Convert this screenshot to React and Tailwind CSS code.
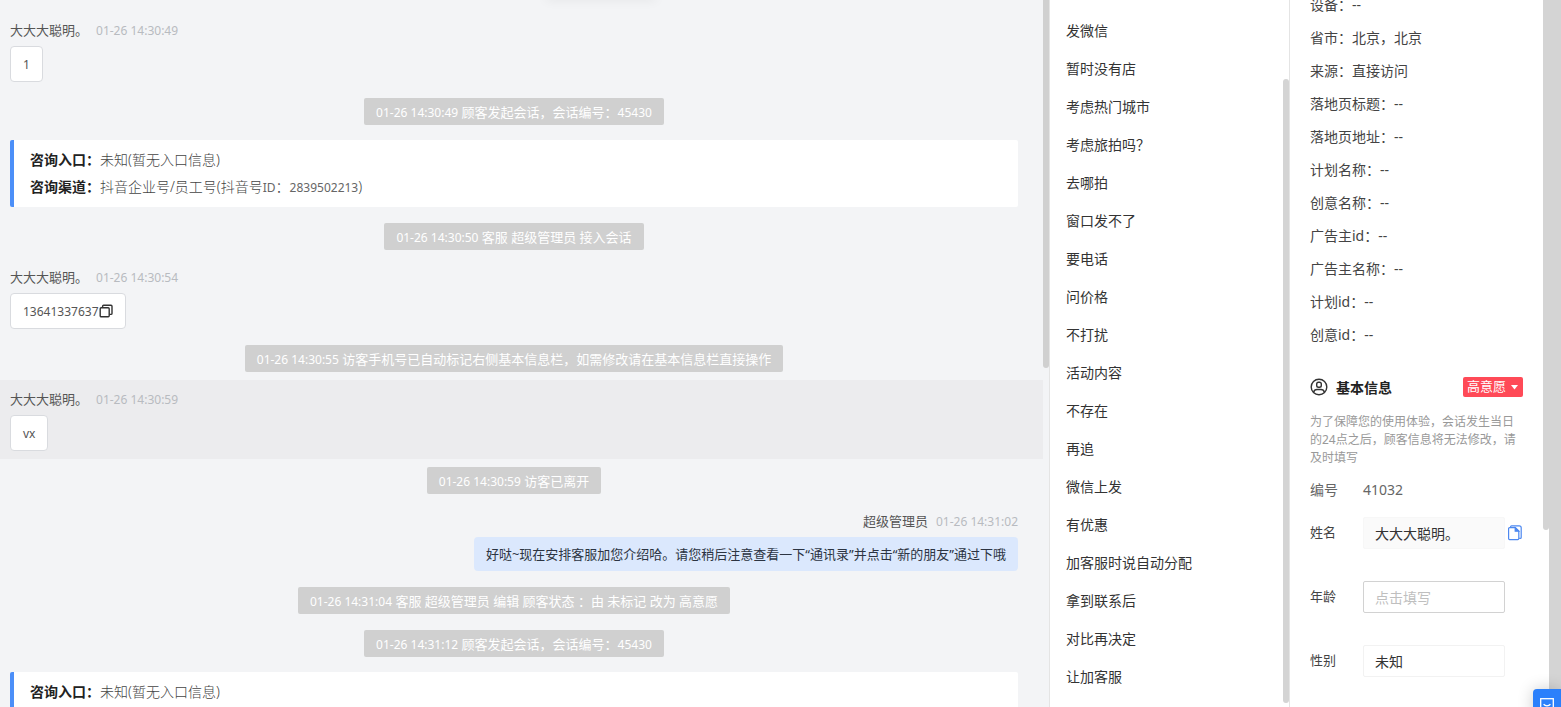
const timeline = [
  { type: 'visitor', name: '大大大聪明。', time: '01-26 14:30:49', text: '1' },
  { type: 'notice', time: '01-26 14:30:49', text: '顾客发起会话，会话编号：', code: '45430' },
  { type: 'entry', channel: '抖音企业号/员工号', channelId: '2839502213' },
  { type: 'notice', time: '01-26 14:30:50', text: '客服 超级管理员 接入会话' },
  { type: 'visitor', name: '大大大聪明。', time: '01-26 14:30:54', text: '13641337637', copy: true },
  { type: 'notice', time: '01-26 14:30:55', text: '访客手机号已自动标记右侧基本信息栏，如需修改请在基本信息栏直接操作' },
  { type: 'visitor', name: '大大大聪明。', time: '01-26 14:30:59', text: 'vx', active: true },
  { type: 'notice', time: '01-26 14:30:59', text: '访客已离开' },
  {
    type: 'agent',
    name: '超级管理员',
    time: '01-26 14:31:02',
    text: '好哒~现在安排客服加您介绍哈。请您稍后注意查看一下“通讯录”并点击“新的朋友”通过下哦',
  },
  { type: 'notice', time: '01-26 14:31:04', text: '客服 超级管理员 编辑 顾客状态 ：由 未标记 改为 高意愿' },
  { type: 'notice', time: '01-26 14:31:12', text: '顾客发起会话，会话编号：', code: '45430' },
  { type: 'entry' },
];

const replies = [
  '发微信', '暂时没有店', '考虑热门城市', '考虑旅拍吗？', '去哪拍', '窗口发不了',
  '要电话', '问价格', '不打扰', '活动内容', '不存在', '再追',
  '微信上发', '有优惠', '加客服时说自动分配', '拿到联系后', '对比再决定', '让加客服',
];

const details = [
  ['设备', '--'],
  ['省市', '北京，北京'],
  ['来源', '直接访问'],
  ['落地页标题', '--'],
  ['落地页地址', '--'],
  ['计划名称', '--'],
  ['创意名称', '--'],
  ['广告主id', '--'],
  ['广告主名称', '--'],
  ['计划id', '--'],
  ['创意id', '--'],
];

function CopyIcon() {
  return (
    <svg width="14" height="14" viewBox="0 0 14 14" fill="none" stroke="#333" strokeWidth="1.4">
      <rect x="1.2" y="3.8" width="9" height="9" rx="1" />
      <path d="M3.6 3.6V2.2a1 1 0 0 1 1-1H12a1 1 0 0 1 1 1v7.2a1 1 0 0 1-1 1h-1.6" />
    </svg>
  );
}

function PagesIcon() {
  return (
    <svg width="14" height="16" viewBox="0 0 14 16" fill="none" stroke="#4d88f0" strokeWidth="1.2">
      <path d="M2.6 2.4V1.8a1 1 0 0 1 1-1h7.6a2 2 0 0 1 2 2v9.6a1 1 0 0 1-1 1h-1" />
      <path d="M1.6 2.6h5.8l3.4 3.4v7.6a1 1 0 0 1-1 1H1.6a1 1 0 0 1-1-1v-10a1 1 0 0 1 1-1Z" />
      <path d="M7.2 2.8v3.4h3.5Z" fill="#4d88f0" />
    </svg>
  );
}

function UserIcon() {
  return (
    <svg width="18" height="18" viewBox="0 0 18 18" fill="none" stroke="#333" strokeWidth="1.4">
      <circle cx="9" cy="9" r="7.8" />
      <rect x="6.7" y="4.2" width="4.6" height="5" rx="1.8" />
      <path d="M3.6 14.2c.5-1.8 1.8-2.7 3.4-2.7h4c1.6 0 2.9.9 3.4 2.7" />
    </svg>
  );
}

function Sender({ item }) {
  return (
    <div className="flex items-center h-6 mb-[3px] text-[13px] text-[#555]">
      <span>{item.name}</span>
      <time className="ml-2 text-xs text-[#b8bbc0]">{item.time}</time>
    </div>
  );
}

function Visitor({ item }) {
  return (
    <div className={`py-2 pl-2.5 ${item.active ? 'bg-[#ececee]' : ''}`}>
      <Sender item={item} />
      <div className="inline-flex items-center h-9 px-3 pt-0.5 bg-white border border-[#d9dbdf] rounded text-xs text-[#555] align-top">
        {item.text}
        {item.copy && (
          <button type="button" aria-label="复制" className="pb-0.5">
            <CopyIcon />
          </button>
        )}
      </div>
    </div>
  );
}

function Agent({ item }) {
  return (
    <div className="flex flex-col items-end py-2 pl-2.5 pr-[25px]">
      <Sender item={item} />
      <p className="px-3 bg-[#dbe8fd] rounded text-[13px] leading-[34px] text-[#2c3442]">{item.text}</p>
    </div>
  );
}

function Notice({ item }) {
  return (
    <div className="flex justify-center py-2 pl-2.5 pr-[25px]">
      <p className="px-3 pt-px bg-[#d0d0d0] rounded-xs text-[13px] leading-[26px] text-white">
        <time className="text-xs">{item.time}</time> {item.text}
        {item.code && <span className="text-xs">{item.code}</span>}
      </p>
    </div>
  );
}

function Entry({ item }) {
  return (
    <div className="pt-[7px] pb-2 pl-2.5 pr-[25px]">
      <div className="min-h-[67px] py-1.5 pl-4 bg-white border-l-4 border-[#4c8ff8] rounded-xs text-[14px] leading-[27px] font-light text-[#444]">
        <p>
          <b className="font-bold text-[#222]">咨询入口：</b>未知(暂无入口信息)
        </p>
        {item.channel && (
          <p>
            <b className="font-bold text-[#222]">咨询渠道：</b>
            {item.channel}(抖音号<span className="text-xs font-normal text-[#666]">ID</span>：
            <span className="text-xs font-normal text-[#666]">{item.channelId}</span>)
          </p>
        )}
      </div>
    </div>
  );
}

const rows = { visitor: Visitor, agent: Agent, notice: Notice, entry: Entry };

function Chat() {
  return (
    <main className="relative flex-1 min-w-0 pt-[11px] bg-[#f3f4f6]">
      <div className="absolute -top-2 left-1/2 w-[110px] h-2 ml-6 shadow-[0_0_12px_rgba(0,0,0,0.07)]" />
      {timeline.map((item, i) => {
        const Row = rows[item.type];
        return <Row key={i} item={item} />;
      })}
    </main>
  );
}

function Replies() {
  return (
    <aside className="flex w-[241px] shrink-0 border-l border-r border-[#e4e4e4]">
      <ul className="flex-1 pt-3 pl-4 text-[14px] text-[#333]">
        {replies.map(text => (
          <li key={text} className="h-[38px] leading-[38px]">
            {text}
          </li>
        ))}
      </ul>
      <div className="flex w-1.5 pt-[79px] pb-1">
        <div className="flex-1 bg-[#d4d4d4] rounded-sm" />
      </div>
    </aside>
  );
}

function Profile() {
  const box = 'w-[142px] h-8 px-[11px] border rounded-xs text-[14px] outline-none';

  return (
    <aside className="w-[253px] shrink-0 px-5">
      <dl className="-mt-3 text-[14px] text-[#444]">
        {details.map(([label, value]) => (
          <div key={label} className="flex h-[33px] leading-[33px]">
            <dt>{label}：</dt>
            <dd>{value}</dd>
          </div>
        ))}
      </dl>

      <div className="flex items-center h-6 mt-6">
        <UserIcon />
        <h2 className="ml-2 text-[14px] font-bold text-[#222]">基本信息</h2>
        <button type="button" className="flex items-center h-5 ml-auto px-1 bg-[#ff4a57] rounded-xs text-[13px] text-white">
          高意愿
          <svg width="9" height="5" viewBox="0 0 9 5" className="ml-1">
            <path d="M1 0h7L4.5 4.5Z" fill="#fff" />
          </svg>
        </button>
      </div>
      <p className="mt-3.5 text-xs leading-[18px] text-[#999]">
        为了保障您的使用体验，会话发生当日的24点之后，顾客信息将无法修改，请及时填写
      </p>

      <div className="flex items-center h-8 mt-1.5 text-[14px] text-[#666]">
        <span className="w-[53px]">编号</span>
        <span>41032</span>
      </div>
      <form className="flex flex-col gap-8 mt-3 text-[13px] text-[#444]">
        <div className="flex items-center">
          <label htmlFor="name" className="w-[53px]">姓名</label>
          <input id="name" defaultValue="大大大聪明。" className={`${box} bg-[#fafafa] border-[#f7f7f7] text-[#333]`} />
          <button type="button" aria-label="复制姓名" className="ml-[3px]">
            <PagesIcon />
          </button>
        </div>
        <div className="flex items-center">
          <label htmlFor="age" className="w-[53px]">年龄</label>
          <input id="age" placeholder="点击填写" className={`${box} bg-white border-[#d2d2d2] placeholder:text-[#bfbfbf]`} />
        </div>
        <div className="flex items-center">
          <label htmlFor="gender" className="w-[53px]">性别</label>
          <select id="gender" className={`${box} appearance-none bg-white border-[#f2f2f2] text-[#333]`}>
            <option>未知</option>
            <option>男</option>
            <option>女</option>
          </select>
        </div>
      </form>
    </aside>
  );
}

export default function App() {
  return (
    <div
      lang="zh-CN"
      className="relative flex h-screen overflow-hidden bg-white font-['Noto_Sans','Noto_Sans_CJK_SC',sans-serif]"
    >
      <Chat />
      <div className="w-1.5 shrink-0 bg-[#f3f4f6]">
        <div className="h-[52%] bg-[#d0d0d0] rounded-b-sm" />
      </div>
      <Replies />
      <Profile />
      <div className="w-1.5 shrink-0">
        <div className="h-3/4 bg-[#d4d4d4] rounded-b-sm" />
      </div>
      <div className="w-3 shrink-0 bg-[#d4d4d4]" />

      <button
        type="button"
        aria-label="消息"
        className="absolute right-0 -bottom-3 flex justify-center w-7 h-[30px] pt-[9px] bg-[#2b80fb] rounded-tl shadow-[0_0_16px_rgba(0,0,0,0.2)]"
      >
        <svg width="14" height="14" viewBox="0 0 14 14" fill="none" stroke="#fff" strokeWidth="1.3">
          <rect x=".7" y=".7" width="12.6" height="12.6" />
          <path d="M3.6 6.3c1.8 2 5 2 6.8 0" />
        </svg>
      </button>
    </div>
  );
}
